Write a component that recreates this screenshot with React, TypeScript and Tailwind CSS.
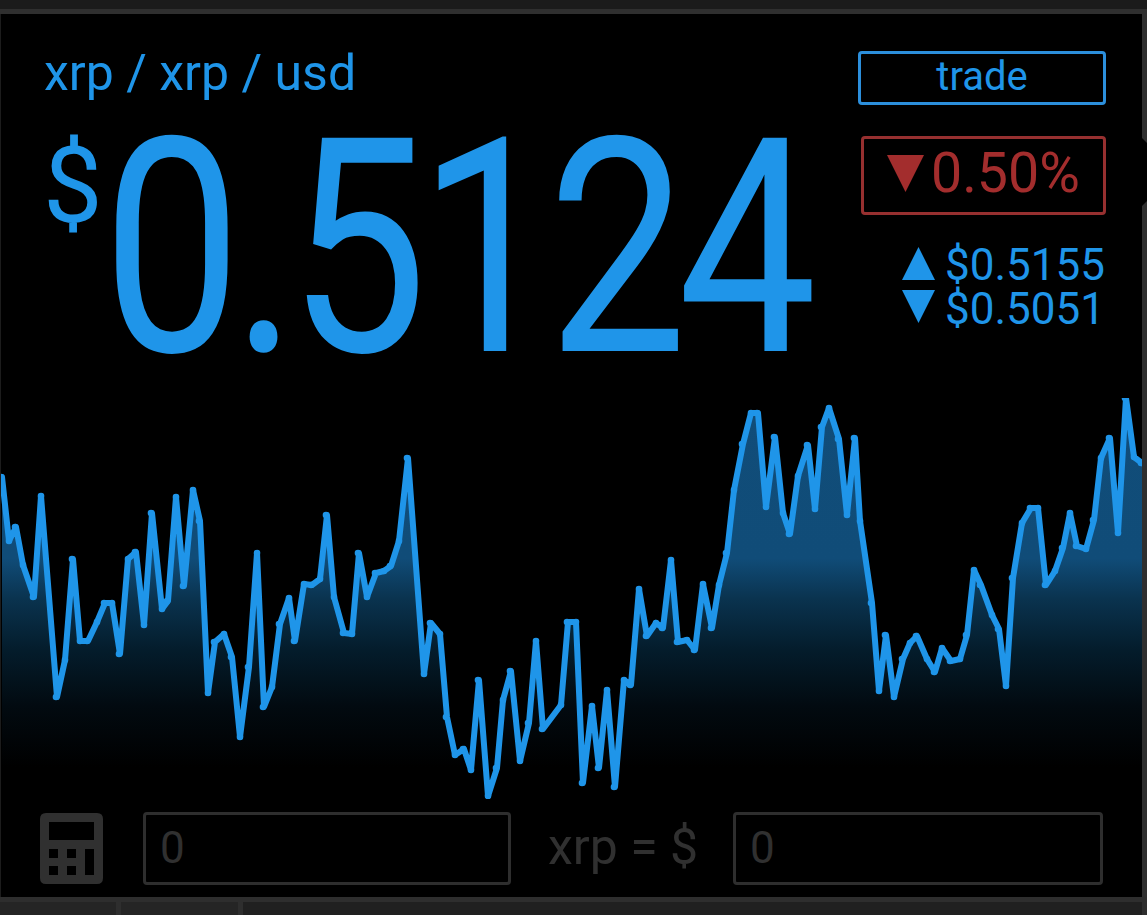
import { useState } from 'react';

interface Point {
  x: number;
  y: number;
}

// price history, in chart units
const history: [number, number][] = [
  [2, 477], [9, 541], [16, 527], [23, 565], [34, 597], [41, 496], [57, 697], [65, 660],
  [73, 559], [80, 641], [88, 641], [97, 622], [105, 603], [112, 603], [120, 654], [128, 559],
  [136, 552], [144, 625], [152, 513], [162, 609], [168, 601], [176, 497], [184, 586], [193, 490],
  [200, 521], [208, 693], [215, 642], [224, 634], [232, 657], [240, 737], [249, 667], [257, 553],
  [264, 707], [272, 687], [280, 624], [289, 598], [295, 641], [304, 584], [312, 585], [320, 579],
  [327, 515], [334, 597], [344, 633], [352, 634], [359, 553], [367, 597], [376, 573], [384, 571],
  [391, 566], [399, 541], [408, 458], [424, 674], [431, 623], [440, 634], [447, 717], [455, 755],
  [464, 749], [471, 770], [479, 680], [488, 796], [497, 768], [503, 700], [511, 671], [520, 761],
  [529, 723], [536, 641], [543, 729], [561, 705], [568, 622], [576, 622], [583, 783], [592, 706],
  [599, 768], [607, 690], [615, 787], [624, 680], [631, 685], [639, 589], [647, 636], [656, 623],
  [663, 628], [671, 560], [678, 642], [687, 640], [695, 650], [703, 584], [712, 628], [719, 585],
  [727, 553], [734, 490], [743, 444], [751, 413], [758, 413], [766, 507], [775, 437], [783, 513],
  [790, 534], [798, 476], [808, 445], [815, 509], [822, 427], [829, 408], [839, 439], [847, 515],
  [855, 438], [860, 521], [872, 603], [879, 691], [886, 635], [894, 697], [903, 659], [910, 643],
  [917, 636], [927, 659], [935, 672], [942, 648], [951, 661], [960, 659], [967, 635], [974, 570],
  [981, 585], [992, 615], [999, 629], [1006, 686], [1013, 578], [1022, 523], [1031, 508], [1038, 508],
  [1046, 585], [1055, 571], [1063, 548], [1070, 513], [1077, 546], [1086, 549], [1094, 520],
  [1101, 458], [1110, 438], [1118, 533], [1126, 398], [1134, 457], [1142, 463],
];

const points: Point[] = history.map(([x, y]) => ({ x, y }));

function PriceChart() {
  const line = points.map((p) => `${p.x},${p.y}`).join(' ');

  return (
    <svg className="block w-full h-[401px]" viewBox="1 398 1141 401" preserveAspectRatio="none">
      <defs>
        <linearGradient id="fill" gradientUnits="userSpaceOnUse" x1="0" y1="398" x2="0" y2="799">
          <stop offset="0" stopColor="#114d79" />
          <stop offset="0.4" stopColor="#104c78" />
          <stop offset="0.5" stopColor="#0a334f" />
          <stop offset="0.63" stopColor="#041c2b" />
          <stop offset="0.77" stopColor="#020a10" />
          <stop offset="0.92" stopColor="#000000" />
        </linearGradient>
      </defs>
      <polygon points={`2,799 ${line} 1142,799`} fill="url(#fill)" />
      <polyline
        points={line}
        fill="none"
        stroke="#1f95e9"
        strokeWidth="6"
        strokeLinejoin="round"
        strokeLinecap="round"
      />
      {points.map((p, i) => (
        <circle key={i} cx={i % 2 ? p.x : p.x - 1} cy={p.y} r="3.3" fill="#1f95e9" />
      ))}
    </svg>
  );
}

function Triangle({ up = false, className }: { up?: boolean; className: string }) {
  return (
    <svg className={className} viewBox="0 0 36 36" preserveAspectRatio="none" fill="currentColor">
      <path d={up ? 'M18 0L36 36H0Z' : 'M0 0H36L18 36Z'} />
    </svg>
  );
}

function CalculatorIcon() {
  return (
    <svg className="w-[63px] h-[71px] shrink-0" viewBox="0 0 63 71" fill="#303030">
      <path
        fillRule="evenodd"
        d="M6 0H57Q63 0 63 6V65Q63 71 57 71H6Q0 71 0 65V6Q0 0 6 0ZM9 9V27H54V9ZM9 36V45H18V36ZM27 36V45H36V36ZM45 36V62H54V36ZM9 53V62H18V53ZM27 53V62H36V53Z"
      />
    </svg>
  );
}

export default function App() {
  const [amount, setAmount] = useState('0');
  const [total, setTotal] = useState('0');

  const inputClass =
    'h-[73px] border-3 border-[#2e2e2e] rounded-[4px] bg-transparent pl-[14px] pb-[1px] text-[44px] leading-none text-[#303030] outline-none';

  return (
    <div className="w-[1147px] h-[915px] flex flex-col overflow-hidden bg-black font-['Roboto',sans-serif] text-[#1f95e9]">
      <div className="h-[14px] shrink-0 bg-[#1b1b1b] border-b-5 border-[#2f2f2f]" />

      <div className="flex h-[883px] shrink-0">
        <main className="flex-1 min-w-0 flex flex-col border-l border-[#1c1c1c]">
          {/* Pair, price and daily stats */}
          <section className="h-[384px] shrink-0 flex justify-between pl-[43px] pr-[36px]">
            <div className="pt-[34px]">
              <h1 className="text-[50px] leading-[51px] whitespace-nowrap">xrp / xrp / usd</h1>
              <div className="flex items-start">
                <span className="w-[60px] pt-[34px] text-[106px] leading-none -indent-px">$</span>
                <span className="block w-[700px] text-[300px] leading-[299px] tracking-[-11.4px] whitespace-nowrap origin-left scale-x-[0.826] -indent-[2px]">
                  0.5124
                </span>
              </div>
            </div>

            <aside className="w-[248px] shrink-0 flex flex-col items-end pt-[37px]">
              <button className="w-[248px] h-[54px] border-3 border-[#2c8fdc] rounded-[4px] text-[40px] leading-none pb-[3px]">
                trade
              </button>
              <div className="mt-[31px] w-[245px] h-[79px] flex items-start border-3 border-[#973030] rounded-[4px] pl-[23px] pt-[7px] text-[#a32d2d]">
                <Triangle className="mt-[9px] w-[37px] h-[37px]" />
                <span className="ml-[7px] text-[55.5px] leading-[56px]">0.50%</span>
              </div>
              <div className="mt-[28px] w-[204px] flex flex-col text-[44px] leading-[44px]">
                <div className="flex items-start">
                  <Triangle up className="mt-[4px] w-[33px] h-[33px]" />
                  <span className="ml-[10px]">$0.5155</span>
                </div>
                <div className="flex items-start">
                  <Triangle className="mt-[3px] w-[33px] h-[33px]" />
                  <span className="ml-[10px]">$0.5051</span>
                </div>
              </div>
            </aside>
          </section>

          <PriceChart />

          {/* Converter */}
          <section className="flex items-center h-[98px] pl-[39px] text-[#303030]">
            <CalculatorIcon />
            <input
              className={`${inputClass} ml-[40px] w-[368px]`}
              value={amount}
              onChange={(e) => setAmount(e.target.value)}
            />
            <span className="w-[222px] pl-[37px] pb-[3px] text-[50px] leading-none whitespace-nowrap">
              xrp = $
            </span>
            <input
              className={`${inputClass} w-[370px]`}
              value={total}
              onChange={(e) => setTotal(e.target.value)}
            />
          </section>
        </main>

        {/* Right edge with the notch between the two panels */}
        <div className="w-[5px] shrink-0 flex flex-col">
          <div className="h-[129px] bg-[#2f2f2f] [clip-path:polygon(0_0,100%_0,100%_100%,0_124px)]" />
          <div className="h-[58px]" />
          <div className="flex-1 bg-[#2f2f2f] [clip-path:polygon(0_5px,100%_0,100%_100%,0_100%)]" />
        </div>
      </div>

      <div className="h-[18px] shrink-0 flex border-t-5 border-[#2e2e2e] bg-[#202020]">
        <div className="w-[121px] bg-[#252525] border-r-5 border-[#2e2e2e]" />
        <div className="w-[122px] bg-[#252525] border-r-5 border-[#2e2e2e]" />
        <div className="flex-1" />
        <div className="w-[5px] bg-[#2e2e2e]" />
      </div>
    </div>
  );
}
